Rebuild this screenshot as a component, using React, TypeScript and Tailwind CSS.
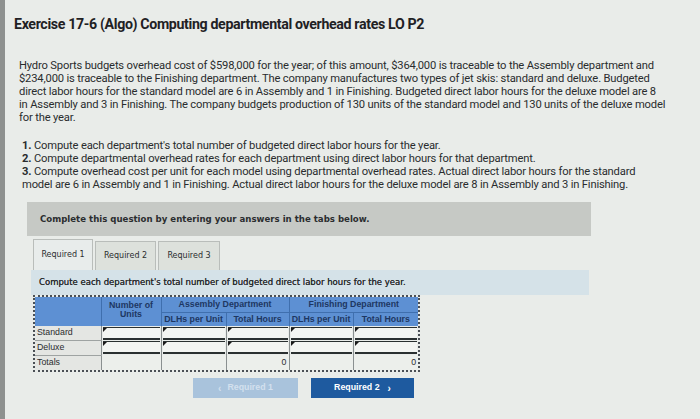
import React from "react";

const Tri = () => (
  <span className="absolute left-0 top-0 w-0 h-0 border-t-[4px] border-t-[#1a1a1a] border-r-[4px] border-r-transparent" />
);

function InputCell() {
  return (
    <td className="p-0 h-[14px] border-l border-[#8a9090]">
      <div className="relative h-[13px] mx-[1px] bg-[#f3f5f2] border-t border-b-2 border-[#2a3030]">
        <Tri />
      </div>
    </td>
  );
}

export default function App() {
  const body = "font-['Roboto',sans-serif] text-[11.2px] leading-[13px] text-[#2a2c2e] tracking-[-0.015em] whitespace-nowrap";
  return (
    <div className="w-[700px] h-[419px] overflow-hidden flex bg-[#e9ece9]">
      <div className="w-[5px] h-full bg-[#8e918f]" />
      <div className="flex-1 flex flex-col">
        <div className="pl-[9px] pt-[15px] font-['Roboto',sans-serif] font-bold text-[14.2px] leading-[18px] text-[#1f2124] tracking-[-0.025em] whitespace-nowrap">
          Exercise 17-6 (Algo) Computing departmental overhead rates LO P2
        </div>
        <div className={`pl-[14px] mt-[26px] ${body}`}>
          <div>Hydro Sports budgets overhead cost of $598,000 for the year; of this amount, $364,000 is traceable to the Assembly department and</div>
          <div>$234,000 is traceable to the Finishing department. The company manufactures two types of jet skis: standard and deluxe. Budgeted</div>
          <div>direct labor hours for the standard model are 6 in Assembly and 1 in Finishing. Budgeted direct labor hours for the deluxe model are 8</div>
          <div>in Assembly and 3 in Finishing. The company budgets production of 130 units of the standard model and 130 units of the deluxe model</div>
          <div>for the year.</div>
        </div>
        <div className={`pl-[17px] mt-[15px] ${body} leading-[12.7px]`}>
          <div><b>1.</b> Compute each department's total number of budgeted direct labor hours for the year.</div>
          <div><b>2.</b> Compute departmental overhead rates for each department using direct labor hours for that department.</div>
          <div><b>3.</b> Compute overhead cost per unit for each model using departmental overhead rates. Actual direct labor hours for the standard</div>
          <div>model are 6 in Assembly and 1 in Finishing. Actual direct labor hours for the deluxe model are 8 in Assembly and 3 in Finishing.</div>
        </div>
        <div className="ml-[22px] mt-[11px] w-[564px] h-[34px] bg-[#c6c9c5] flex items-center pl-[13px]">
          <span className="font-['DejaVu_Sans',sans-serif] font-bold text-[8.6px] text-[#2b2d2f] whitespace-nowrap">
            Complete this question by entering your answers in the tabs below.
          </span>
        </div>
        <div className="ml-[28px] mt-[2px] flex items-end gap-[2px] h-[32px]">
          <div className="w-[60px] h-[31px] bg-[#e8eceb] border border-[#b9bdba] border-b-0 flex items-center justify-center font-['DejaVu_Sans',sans-serif] text-[8px] text-[#2b2d2f]">Required 1</div>
          <div className="w-[61px] h-[29px] bg-[#dde1dc] border border-[#b9bdba] border-b-0 flex items-center justify-center font-['DejaVu_Sans',sans-serif] text-[8px] text-[#2b2d2f]">Required 2</div>
          <div className="w-[62px] h-[29px] bg-[#dde1dc] border border-[#b9bdba] border-b-0 flex items-center justify-center font-['DejaVu_Sans',sans-serif] text-[8px] text-[#2b2d2f]">Required 3</div>
        </div>
        <div className="ml-[26px] w-[558px] h-[25px] bg-[#d5e2e8] flex items-center pl-[8px]">
          <span className="font-['DejaVu_Sans',sans-serif] text-[8.5px] text-[#2b2d2f] whitespace-nowrap [text-shadow:0_0_0.3px_#2b2d2f]">
            Compute each department's total number of budgeted direct labor hours for the year.
          </span>
        </div>
        <div className="ml-[28px] w-[387px] border-2 border-dotted border-[#4a4f55]">
          <table className="w-full border-collapse table-fixed font-['Liberation_Sans',sans-serif] text-[8.8px]">
            <colgroup>
              <col className="w-[66px]" />
              <col className="w-[60px]" />
              <col className="w-[65px]" />
              <col className="w-[63px]" />
              <col className="w-[64px]" />
              <col className="w-[65px]" />
            </colgroup>
            <thead className="bg-[#5d90d3] text-[#1d3762] font-bold">
              <tr className="h-[15px]">
                <th rowSpan={2} className="border-r border-[#3f6fae]" />
                <th rowSpan={2} className="border-r border-[#3f6fae] leading-[9px] align-middle pb-[3px]">Number of<br />Units</th>
                <th colSpan={2} className="border-r border-b border-[#3f6fae] font-bold">Assembly Department</th>
                <th colSpan={2} className="border-b border-[#3f6fae] font-bold">Finishing Department</th>
              </tr>
              <tr className="h-[14px]">
                <th className="border-r border-[#3f6fae] font-bold">DLHs per Unit</th>
                <th className="border-r border-[#3f6fae] font-bold">Total Hours</th>
                <th className="border-r border-[#3f6fae] font-bold">DLHs per Unit</th>
                <th className="font-bold">Total Hours</th>
              </tr>
            </thead>
            <tbody className="text-[#2a2c2e]">
              <tr>
                <td className="h-[14px] pl-[2px] bg-[#e4e6e3] border-b border-[#9ea3a2]">Standard</td>
                <InputCell /><InputCell /><InputCell /><InputCell /><InputCell />
              </tr>
              <tr>
                <td className="h-[15px] pl-[2px] bg-[#e4e6e3] border-b border-[#9ea3a2]">Deluxe</td>
                <InputCell /><InputCell /><InputCell /><InputCell /><InputCell />
              </tr>
              <tr className="h-[15px]">
                <td className="pl-[2px] bg-[#e4e6e3]">Totals</td>
                <td className="border-l border-[#8a9090] bg-[#ecefeb]" />
                <td className="border-l border-[#8a9090] bg-[#ecefeb]" />
                <td className="border-l border-[#8a9090] bg-[#ecefeb] text-right pr-[2px]">0</td>
                <td className="border-l border-[#8a9090] bg-[#ecefeb]" />
                <td className="border-l border-[#8a9090] bg-[#ecefeb] text-right pr-[2px]">0</td>
              </tr>
            </tbody>
          </table>
        </div>
        <div className="ml-[188px] mt-[6px] flex gap-[13px]">
          <div className="w-[105px] h-[20px] bg-[#a9c3dc] flex items-center justify-center gap-[6px] font-['Liberation_Sans',sans-serif] font-bold text-[8.8px] text-[#d3e0ee]">
            <span className="text-[10px]">&lsaquo;</span><span>Required 1</span>
          </div>
          <div className="w-[103px] h-[20px] bg-[#1e5a9f] flex items-center justify-center gap-[8px] font-['Liberation_Sans',sans-serif] font-bold text-[8.8px] text-white">
            <span>Required 2</span><span className="text-[10px]">&rsaquo;</span>
          </div>
        </div>
      </div>
    </div>
  );
}
